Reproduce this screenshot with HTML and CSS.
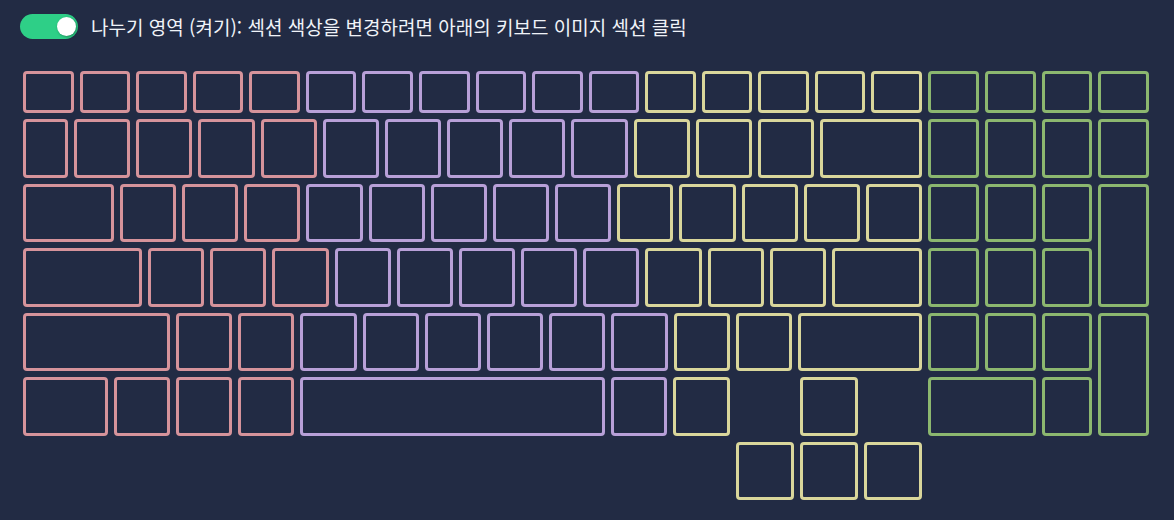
FILE: index.html
```html
<!DOCTYPE html>
<html lang="ko">
<head>
    <meta charset="UTF-8">
    <meta name="viewport" content="width=device-width, initial-scale=1.0">
    <title>키보드 섹션</title>
    <link rel="stylesheet" href="styles.css">
</head>
<body>
    <div class="header">
        <div class="toggle on"><span class="knob"></span></div>
        <span class="label">나누기 영역 (켜기): 섹션 색상을 변경하려면 아래의 키보드 이미지 섹션 클릭</span>
    </div>

    <div class="keyboard">
        <div class="main">
            <!-- 기능키 줄 -->
            <div class="row fn">
                <div class="key red"></div><div class="key red"></div><div class="key red"></div><div class="key red"></div><div class="key red"></div>
                <div class="key purple"></div><div class="key purple"></div><div class="key purple"></div><div class="key purple"></div><div class="key purple"></div><div class="key purple"></div>
                <div class="key yellow"></div><div class="key yellow"></div><div class="key yellow"></div><div class="key yellow"></div><div class="key yellow"></div>
            </div>
            <!-- 숫자 줄 -->
            <div class="row">
                <div class="key red tilde"></div><div class="key red"></div><div class="key red"></div><div class="key red"></div><div class="key red"></div>
                <div class="key purple"></div><div class="key purple"></div><div class="key purple"></div><div class="key purple"></div><div class="key purple"></div>
                <div class="key yellow"></div><div class="key yellow"></div><div class="key yellow"></div><div class="key yellow backspace"></div>
            </div>
            <div class="row">
                <div class="key red tab"></div><div class="key red"></div><div class="key red"></div><div class="key red"></div>
                <div class="key purple"></div><div class="key purple"></div><div class="key purple"></div><div class="key purple"></div><div class="key purple"></div>
                <div class="key yellow"></div><div class="key yellow"></div><div class="key yellow"></div><div class="key yellow"></div><div class="key yellow"></div>
            </div>
            <div class="row">
                <div class="key red caps"></div><div class="key red"></div><div class="key red"></div><div class="key red"></div>
                <div class="key purple"></div><div class="key purple"></div><div class="key purple"></div><div class="key purple"></div><div class="key purple"></div>
                <div class="key yellow"></div><div class="key yellow"></div><div class="key yellow"></div><div class="key yellow enter"></div>
            </div>
            <div class="row">
                <div class="key red lshift"></div><div class="key red"></div><div class="key red"></div>
                <div class="key purple"></div><div class="key purple"></div><div class="key purple"></div><div class="key purple"></div><div class="key purple"></div><div class="key purple"></div>
                <div class="key yellow"></div><div class="key yellow"></div><div class="key yellow rshift"></div>
            </div>
            <div class="row">
                <div class="key red ctrl"></div><div class="key red"></div><div class="key red"></div><div class="key red"></div>
                <div class="key purple space"></div><div class="key purple"></div>
                <div class="key yellow wide"></div>
                <div class="blank"></div>
                <div class="key yellow arrow"></div>
                <div class="blank"></div>
            </div>
            <div class="row arrows">
                <div class="key yellow arrow"></div><div class="key yellow arrow"></div><div class="key yellow arrow"></div>
            </div>
        </div>

        <!-- 숫자 키패드 -->
        <div class="numpad">
            <div class="key green"></div><div class="key green"></div><div class="key green"></div><div class="key green"></div>
            <div class="key green"></div><div class="key green"></div><div class="key green"></div><div class="key green"></div>
            <div class="key green"></div><div class="key green"></div><div class="key green"></div><div class="key green tall"></div>
            <div class="key green"></div><div class="key green"></div><div class="key green"></div>
            <div class="key green"></div><div class="key green"></div><div class="key green"></div><div class="key green tall"></div>
            <div class="key green zero"></div><div class="key green"></div>
        </div>
    </div>
</body>
</html>
```

FILE: styles.css
```css
body {
    margin: 0;
    padding: 14px 20px;
    background: #222b44;
    font-family: "Noto Sans CJK KR", "Noto Sans", sans-serif;
    color: #f0f3f8;
}
.header {
    display: flex;
    align-items: center;
    gap: 13px;
    height: 25px;
}
.toggle {
    width: 58px;
    height: 25px;
    box-sizing: border-box;
    border-radius: 13px;
    background: #2ecf87;
    display: flex;
    align-items: center;
    justify-content: flex-end;
    padding: 0 2px;
    cursor: pointer;
}
.knob {
    width: 19px;
    height: 19px;
    border-radius: 50%;
    background: #ffffff;
    box-shadow: 1px 1px 3px rgba(0, 0, 0, 0.35);
}
.label {
    font-size: 19px;
    line-height: 25px;
}
.keyboard {
    display: flex;
    gap: 6px;
    margin: 32px 5px 0 3px;
}
.main {
    flex: 1;
    display: flex;
    flex-direction: column;
    gap: 6px;
}
.row {
    display: flex;
    gap: 6px;
    height: 58.5px;
}
.row.fn {
    height: 42px;
}
.row.arrows {
    justify-content: flex-end;
}
/* flex-grow = 테두리를 뺀 안쪽 너비 */
.key {
    flex: 50.2 1 0;
    box-sizing: border-box;
    border: 3px solid;
    border-radius: 4px;
    cursor: pointer;
}
.key.tilde { flex-grow: 39; }
.key.backspace { flex-grow: 96; }
.key.tab { flex-grow: 85; }
.key.caps { flex-grow: 113; }
.key.enter { flex-grow: 84; }
.key.lshift { flex-grow: 141; }
.key.rshift { flex-grow: 118; }
.key.ctrl { flex-grow: 79; }
.key.space { flex-grow: 299; }
.key.wide { flex-grow: 51.5; }
.key.arrow,
.blank {
    flex: 0 0 58px;
}
.red { border-color: #d6939b; }
.purple { border-color: #b8a0d8; }
.yellow { border-color: #d9d69b; }
.green { border-color: #8cb76f; }
.numpad {
    width: 221px;
    display: grid;
    grid-template-columns: repeat(4, 1fr);
    grid-template-rows: 42px repeat(5, 58.5px);
    gap: 6px;
}
.numpad .tall {
    grid-row: span 2;
}
.numpad .zero {
    grid-column: span 2;
}
```
